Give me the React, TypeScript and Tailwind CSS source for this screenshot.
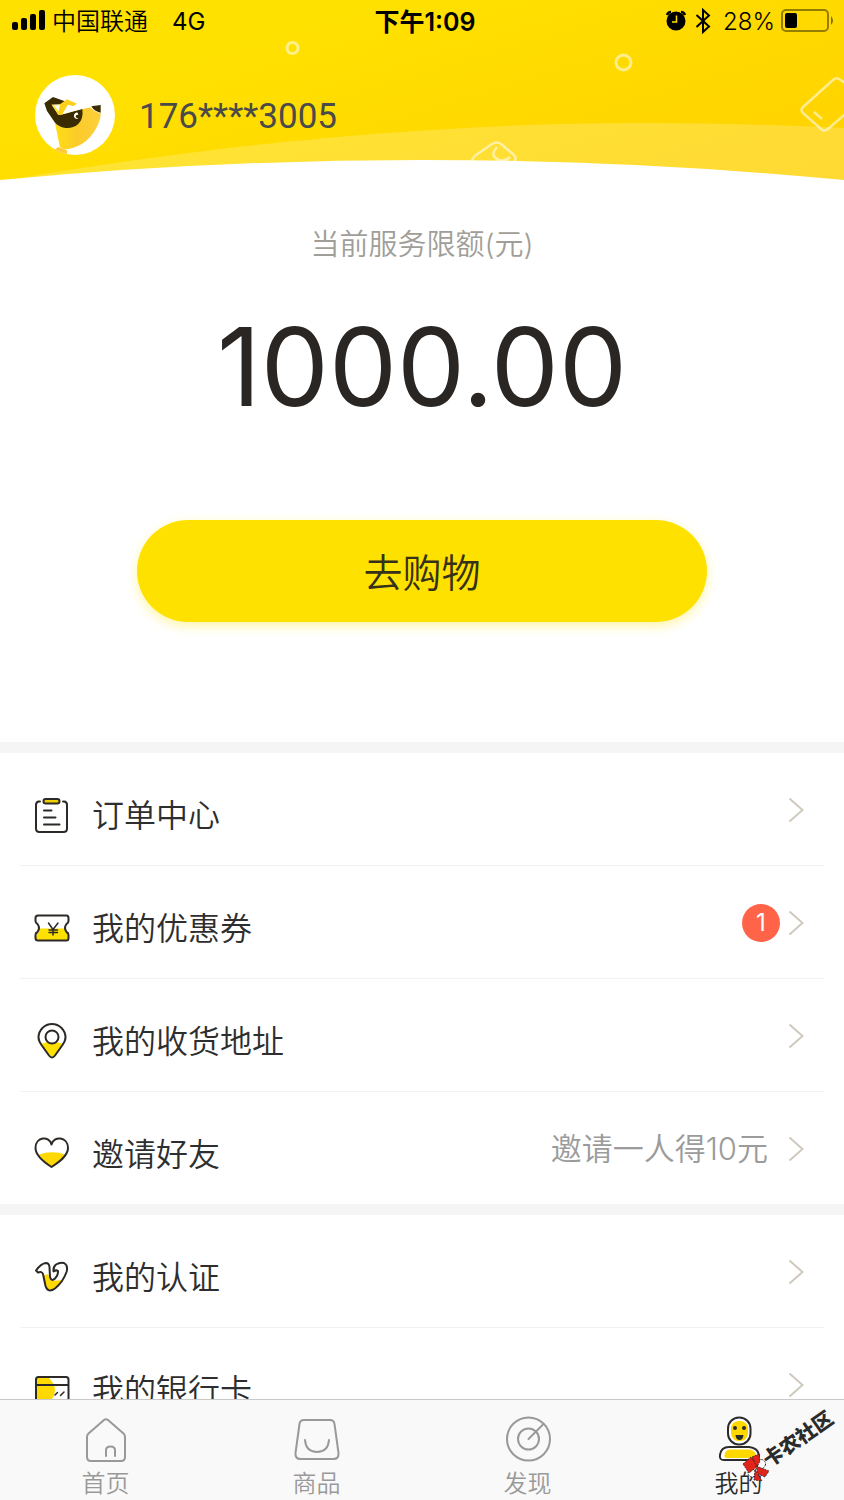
import type { ReactNode } from "react";

const INK = "#2d2926";
const YELLOW = "#ffe100";
const GOLD = "#ffd800";

function StatusBar() {
  return (
    <div className="flex h-[42px] items-center justify-between pl-3 pr-[10px] text-[24px] leading-[32px] text-black">
      <div className="flex flex-1 items-center">
        <svg className="h-[22px] w-[34px]" viewBox="0 0 34 22" aria-hidden="true">
          <rect x="0" y="12" width="6" height="8" rx="2" />
          <rect x="9" y="8" width="6" height="12" rx="2" />
          <rect x="18" y="4" width="6" height="16" rx="2" />
          <rect x="27" y="0" width="6" height="20" rx="2" />
        </svg>
        <span className="ml-[6px] pt-[2px]">中国联通</span>
        <span className="ml-6 pt-[2px] font-normal">4G</span>
      </div>
      <div className="pl-1 pt-[2px] text-[25px] font-semibold">下午1:09</div>
      <div className="flex flex-1 items-center justify-end">
        <svg className="h-[22px] w-[22px]" viewBox="0 0 22 22" aria-hidden="true">
          <circle cx="11" cy="11" r="9.500" />
          <path d="M2 5 Q3 2 6 2 M16 2 Q19 2 20 5" fill="none" stroke="#000" strokeWidth="2.500" />
          <path d="M11.500 5.500 V12 H7" fill="none" stroke={YELLOW} strokeWidth="1.500" />
        </svg>
        <svg className="ml-2 h-[26px] w-4" viewBox="0 0 16 26" aria-hidden="true">
          <path
            d="M1.500 7 L14 18.500 L8 24 V2 L14 7.500 L1.500 19"
            fill="none"
            stroke="#000"
            strokeWidth="2"
          />
        </svg>
        <span className="ml-3 pt-[2px]">28%</span>
        <svg className="ml-[6px] h-6 w-[53px]" viewBox="0 0 53 24" aria-hidden="true">
          <rect x="1" y="1" width="46" height="21" rx="4" fill="none" stroke="#000" strokeOpacity=".42" strokeWidth="2" />
          <rect x="4" y="4" width="12" height="15" rx="2" />
          <path d="M50 7 Q54 11.500 50 16 Z" fillOpacity=".5" />
        </svg>
      </div>
    </div>
  );
}

function HeaderArt() {
  return (
    <svg
      className="absolute inset-0 h-full w-full"
      viewBox="0 0 844 182"
      preserveAspectRatio="none"
      aria-hidden="true"
    >
      <defs>
        <linearGradient id="sky" gradientUnits="userSpaceOnUse" x1="380" y1="0" x2="470" y2="300">
          <stop offset="0" stopColor="#ffe100" />
          <stop offset="1" stopColor="#ffd000" />
        </linearGradient>
      </defs>
      <rect width="844" height="182" fill="url(#sky)" />
      <path
        d="M20 178 C230 142 450 123 640 123 C710 123 780 125 844 128 V182 H0 Z"
        fill="#fff"
        fillOpacity=".2"
      />
      <g fill="none" stroke="#fff" strokeOpacity=".55" strokeWidth="3">
        <circle cx="292.500" cy="48" r="5.500" />
        <circle cx="623.500" cy="62.500" r="7.500" />
        <path
          d="M850 86 L839 79 Q836 77 833 80 L803 107 Q800 110 803 113 L821 129 Q824 132 828 129 L850 110 M814 112 L822 119"
          strokeWidth="2.500"
        />
        <path
          d="M472 162 Q472 158 476 155 L492 144 Q497 141 501 144 L514 155 Q517 158 514 163 M497 147 Q489 156 499 160 Q505 162 510 157"
          strokeWidth="2.500"
        />
      </g>
      <path d="M0 180 Q422 140 844 180 V182 H0 Z" fill="#fff" />
    </svg>
  );
}

function Avatar() {
  return (
    <svg className="h-20 w-20" viewBox="8 8 240 240" role="img" aria-label="头像">
      <defs>
        <linearGradient id="beak">
          <stop offset="0" stopColor="#ffde14" />
          <stop offset=".5" stopColor="#fbcb2a" />
          <stop offset="1" stopColor="#fdd03c" />
        </linearGradient>
        <clipPath id="face">
          <circle cx="128" cy="128" r="120" />
        </clipPath>
      </defs>
      <circle cx="128" cy="128" r="120" fill="#fff" />
      <g clipPath="url(#face)">
        <path
          d="M66 142 L82 222 Q84 230 104 231 Q172 220 200 150 Q206 134 205 123 Q184 118 174 104 L100 120 Z"
          fill="url(#beak)"
        />
        <path d="M64 234 L78 224 L104 234 L104 250 L80 250 Z" fill="#ffc93a" />
        <path
          d="M36 93 L62 74 L102 88 L84 96 L58 97 L78 127 L96 125 L150 109 Q154 140 137 156 Q121 169 100 167 Q76 163 66 148 L44 116 Z"
          fill="#3a2c00"
        />
        <path d="M58 97 L96 97 L90 126 L78 127 Z" fill="#ffe01a" />
        <path d="M64 99 L90 99 L80 118 Z" fill="#fff" />
        <path d="M84 95 L104 81 L134 94 L122 102 L106 98 L90 127 L76 127 Z" fill="#ffd01a" />
        <path d="M90 126 L108 97 L126 103 L176 97 L176 105 L150 110 Z" fill="#fff" />
        <path d="M177 102 L205 98 V121 Q186 118 177 102 Z" fill="#3a2c00" />
        <path
          d="M136 121 A9.500 9.500 0 1 0 138 139 L133 137 A6 6 0 0 1 132 128 L138 127 Z"
          fill="#fff"
        />
      </g>
    </svg>
  );
}

function Chevron() {
  return (
    <svg className="h-[26px] w-4" viewBox="0 0 16 26" aria-hidden="true">
      <path d="M1.500 1.500 L14.500 13 L1.500 24.500" fill="none" stroke="#cfc9be" strokeWidth="2" />
    </svg>
  );
}

function RowIcon({ children }: { children: ReactNode }) {
  return (
    <svg
      className="h-9 w-9 shrink-0"
      viewBox="0 0 36 36"
      fill="none"
      stroke={INK}
      strokeWidth="2"
      strokeLinecap="round"
      strokeLinejoin="round"
      aria-hidden="true"
    >
      {children}
    </svg>
  );
}

const orderIcon = (
  <RowIcon>
    <path d="M6 4.500 H5 Q2 4.500 2 8 V31.500 Q2 35 5.500 35 H29.500 Q33 35 33 31.500 V8 Q33 4.500 30 4.500 H29" />
    <rect x="9.500" y="2" width="16" height="4.500" rx="2.200" fill="#f0d000" />
    <path d="M10 13.500 H17.500 M10 20.500 H21.500 M10 27.500 H25.500" />
  </RowIcon>
);

const couponIcon = (
  <RowIcon>
    <path
      d="M5 18.500 H31 L33 22 Q35 24 35 27 Q35 31 32 31 H5 Q2 31 2 27 Q2 24 5 22 Z"
      fill={YELLOW}
      stroke="none"
    />
    <path d="M4 5.500 H32.500 Q34.500 5.500 34.500 8 V11 Q34.500 13 32.500 14 Q29.500 18 32.500 22 Q34.500 23 34.500 25 V28 Q34.500 30.500 32.500 30.500 H4 Q1.500 30.500 1.500 28 V25 Q1.500 23 3.500 22 Q6.500 18 3.500 14 Q1.500 13 1.500 11 V8 Q1.500 5.500 4 5.500 Z" />
    <path d="M14.500 13 L19 19.500 L24 13 M19 19.500 V25 M15 20 H23.500 M15 22.500 H23.500" strokeWidth="1.500" />
  </RowIcon>
);

const pinIcon = (
  <RowIcon>
    <path d="M7 21 Q18 16 29 21 Q24 30 18 34 Q12 29 7 21 Z" fill={YELLOW} stroke="none" />
    <path d="M18 34.500 Q16.500 34.500 15 32.500 L7.500 22 Q4.500 17.500 4.500 14.500 A13.500 13.500 0 0 1 31.500 14.500 Q31.500 17.500 28.500 22 L21 32.500 Q19.500 34.500 18 34.500 Z" />
    <circle cx="18" cy="14" r="6.500" fill="#fff" />
  </RowIcon>
);

const heartIcon = (
  <RowIcon>
    <path d="M5 18.500 Q18 14 31 18.500 Q25 26 18 31 Q9 25 5 18.500 Z" fill={GOLD} stroke="none" />
    <path d="M17.500 8.500 C15.500 -0.500 1.500 0.500 1.500 12 C1.500 19.500 9 25.500 17.500 31 C26 25.500 34 19.500 34 12 C34 0.500 19.500 -0.500 17.500 8.500 Z" />
  </RowIcon>
);

const verifyIcon = (
  <RowIcon>
    <path d="M9 17 L14 15 L17 22 L28 21 Q22 31 16 32 Q12 31 11 25 Z" fill={GOLD} stroke="none" />
    <path d="M2 11.500 Q7 4.500 12 4 Q15 4 15.500 8 L16 18 Q17.500 23 21 19.500 Q24.500 15.500 24 12 Q22 10.500 19.500 12.500 Q19 8 22 5.500 Q26 3 30 4 Q34.500 6.500 32.500 13 Q29 23 21 29.500 Q14 34.500 11.500 27 L9 15 Q8 12 4 13.500 Z" />
  </RowIcon>
);

const bankIcon = (
  <RowIcon>
    <path d="M2 6 H15 Q21 12 21 18 Q21 25 15 30 H2 Z" fill={GOLD} stroke="none" />
    <rect x="2" y="5" width="32.500" height="26" rx="2.500" />
    <path d="M2 13 H34" strokeLinecap="butt" />
    <path d="M21 23 L23.500 20.500 M26.500 23.500 L30 20" strokeWidth="1.500" />
  </RowIcon>
);

interface Item {
  label: string;
  icon: ReactNode;
  badge?: number;
  hint?: string;
}

const account: Item[] = [
  { label: "订单中心", icon: orderIcon },
  { label: "我的优惠券", icon: couponIcon, badge: 1 },
  { label: "我的收货地址", icon: pinIcon },
  { label: "邀请好友", icon: heartIcon, hint: "邀请一人得10元" },
];

const settings: Item[] = [
  { label: "我的认证", icon: verifyIcon },
  { label: "我的银行卡", icon: bankIcon },
];

function MenuList({ items }: { items: Item[] }) {
  return (
    <ul className="divide-y divide-[#f2f2f2] px-5">
      {items.map((item) => (
        <li key={item.label}>
          <a href="#" className="flex h-28 items-center justify-between pl-[14px] pr-5">
            <span className="flex items-center gap-[22px] pt-3">
              {item.icon}
              <span className="pt-[2px] text-[32px] leading-[40px] text-[#2e2e2e]">{item.label}</span>
            </span>
            <span className="flex items-center pt-[2px]">
              {item.badge && (
                <span className="mr-2 flex h-[38px] w-[38px] items-center justify-center rounded-full bg-[#ff6449] text-[24px] leading-[32px] font-normal text-white">
                  {item.badge}
                </span>
              )}
              {item.hint && (
                <span className="mr-5 text-[31px] leading-[40px] text-[#9b9b9b]">{item.hint}</span>
              )}
              <Chevron />
            </span>
          </a>
        </li>
      ))}
    </ul>
  );
}

function TabIcon({ children }: { children: ReactNode }) {
  return (
    <svg
      className="h-12 w-12"
      viewBox="0 0 48 48"
      fill="none"
      stroke="currentColor"
      strokeWidth="2"
      strokeLinecap="round"
      strokeLinejoin="round"
      aria-hidden="true"
    >
      {children}
    </svg>
  );
}

const tabs = [
  {
    label: "首页",
    icon: (
      <TabIcon>
        <path d="M5 21 Q5 19 6.500 17.500 L22 4 Q24 2.500 26 4 L41.500 17.500 Q43 19 43 21 V41 Q43 45 39 45 H9 Q5 45 5 41 Z" />
        <path d="M24 40 V34 Q24 30.500 28.500 30.500 Q33 30.500 33 34 V40" />
      </TabIcon>
    ),
  },
  {
    label: "商品",
    icon: (
      <TabIcon>
        <path d="M11 4 H37 Q41 4 41.500 8 L45.500 37 Q46 43 40.500 43 H7.500 Q2 43 2.500 37 L6.500 8 Q7 4 11 4 Z" />
        <path d="M12 24 Q13 36 24 36 Q35 36 36 24" />
      </TabIcon>
    ),
  },
  {
    label: "发现",
    icon: (
      <TabIcon>
        <circle cx="24.500" cy="23" r="21.500" />
        <circle cx="24.500" cy="23" r="10.500" />
        <path d="M24.500 23 L39.500 8" />
      </TabIcon>
    ),
  },
  {
    label: "我的",
    active: true,
    icon: (
      <TabIcon>
        <rect x="13" y="1.500" width="22.500" height="27" rx="11" fill="#fff" />
        <rect x="16" y="5" width="17" height="20" rx="7.500" fill={GOLD} stroke="none" />
        <circle cx="20" cy="12" r="2" fill="currentColor" stroke="none" />
        <circle cx="29" cy="12" r="2" fill="currentColor" stroke="none" />
        <path d="M20.500 19 H28.500 Q28 24 24.500 24 Q21 24 20.500 19 Z" fill="currentColor" stroke="none" />
        <path d="M14 31 H34 Q43 32 44 39 Q44 44 40 44 H9 Q4 44 5 39 Q6 31 14 31 Z" fill="#fff" />
        <path d="M15 33.500 H34 Q40 34 41 39 Q41 42 38 42 H12 Q9 42 9.500 39 Q10 34 15 33.500 Z" fill={GOLD} stroke="none" />
      </TabIcon>
    ),
  },
];

function Watermark() {
  return (
    <svg
      className="pointer-events-none absolute bottom-0 right-0 h-24 w-[104px]"
      viewBox="0 -4 104 96"
      role="img"
      aria-label="卡农社区"
    >
      <circle cx="21" cy="56" r="4.500" fill="#fff" stroke="#333" strokeDasharray="2 1" />
      <circle cx="12" cy="65" r="4" fill="#fff" stroke="#333" strokeDasharray="2 1" />
      <g fill="#e2231a" stroke="#222" strokeWidth=".8" strokeDasharray="2 1">
        <path d="M3 56 L11 49 L18 58 L9 65 Z" />
        <path d="M12 49 L19 46 L20 53 L17 59 Z" />
        <path d="M16 58 L29 63 L25 69 L18 66 Z" />
        <path d="M15 61 L22 73 L14 72 Z" />
      </g>
      <text
        x="58"
        y="38"
        transform="rotate(-35 58 31)"
        textAnchor="middle"
        fontSize="20"
        fontWeight="900"
        fill="#2b2b2b"
      >
        卡农社区
      </text>
    </svg>
  );
}

function TabBar() {
  return (
    <nav className="relative grid shrink-0 grid-cols-4 border-t border-[#c9c9c9] bg-[#f9f9f9] pt-4">
      {tabs.map((tab) => (
        <a
          key={tab.label}
          href="#"
          className={
            tab.active
              ? "flex flex-col items-center gap-1 text-[#2b2b2b]"
              : "flex flex-col items-center gap-1 text-[#999999]"
          }
        >
          {tab.icon}
          <span className="text-[24px] leading-[32px]">{tab.label}</span>
        </a>
      ))}
      <Watermark />
    </nav>
  );
}

export default function App() {
  return (
    <div className="flex h-screen flex-col bg-white font-[Inter,'Noto_Sans_CJK_SC',sans-serif] font-[350]">
      <main className="min-h-0 flex-1 overflow-y-auto [scrollbar-width:none]">
        <header className="relative h-[182px]">
          <HeaderArt />
          <div className="relative">
            <StatusBar />
            <div className="flex items-center gap-6 pl-[35px] pt-[33px]">
              <Avatar />
              <span className="pt-[3px] font-[Roboto,sans-serif] text-[35px] leading-[40px] font-normal text-[#4a4a4a]">
                176****3005
              </span>
            </div>
          </div>
        </header>

        {/* Credit limit */}
        <section className="flex flex-col items-center px-[137px] pb-[120px] pt-[43px]">
          <h1 className="text-[29px] leading-[40px] text-[#9f9e98]">当前服务限额(元)</h1>
          <p className="mt-[38px] text-[108px] leading-[128px] font-normal text-[#2a2624]">1000.00</p>
          <button className="mt-[89px] h-[102px] w-full rounded-full bg-[#ffe100] pt-1 text-[39px] leading-[48px] text-[#35311a] shadow-[0_4px_12px_rgba(255,225,0,0.35)]">
            去购物
          </button>
        </section>

        <div className="h-[11px] bg-[#f5f5f5]" />
        <MenuList items={account} />
        <div className="h-[11px] bg-[#f5f5f5]" />
        <MenuList items={settings} />
      </main>

      <TabBar />
    </div>
  );
}
